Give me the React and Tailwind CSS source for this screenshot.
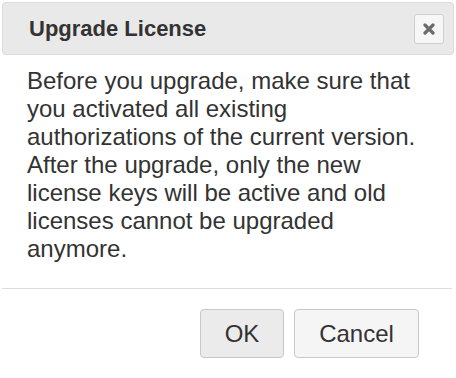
export default function App() {
  return (
    <div className="w-[456px] h-[378px] bg-white px-[2px] pt-[2px] text-[#333] [font-family:'Liberation_Sans',Arial,sans-serif]">
      {/* Title bar */}
      <div className="flex items-center justify-between h-[53px] pl-[26px] pr-[9px] bg-[#e9e9e9] border border-[#dcdcdc] rounded-[4px]">
        <h1 className="text-[22px] font-bold leading-none">Upgrade License</h1>
        <button className="flex items-center justify-center w-[30px] h-[30px] bg-[#f6f6f6] border border-[#cfcfcf] rounded-[3px]">
          <svg width="12" height="12" viewBox="0 0 12 12">
            <path d="M2 2 L10 10 M10 2 L2 10" stroke="#6b6b6b" strokeWidth="3.2" strokeLinecap="round" />
          </svg>
        </button>
      </div>

      {/* Message */}
      <p className="mt-[12px] px-[25px] text-[24px] leading-[28px]">
        Before you upgrade, make sure that you activated all existing authorizations of the current version. After
        the upgrade, only the new license keys will be active and old licenses cannot be upgraded anymore.
      </p>

      <div className="mt-[25px] mr-[2px] border-t border-[#dddddd]" />

      {/* Actions */}
      <div className="flex justify-end gap-[10px] pt-[20px] pr-[35px]">
        <button className="w-[84px] h-[49px] bg-[#ebebeb] border border-[#c8c8c8] rounded-[4px] text-[24px]">OK</button>
        <button className="w-[125px] h-[49px] bg-[#f5f5f5] border border-[#c8c8c8] rounded-[4px] text-[24px]">
          Cancel
        </button>
      </div>
    </div>
  )
}
